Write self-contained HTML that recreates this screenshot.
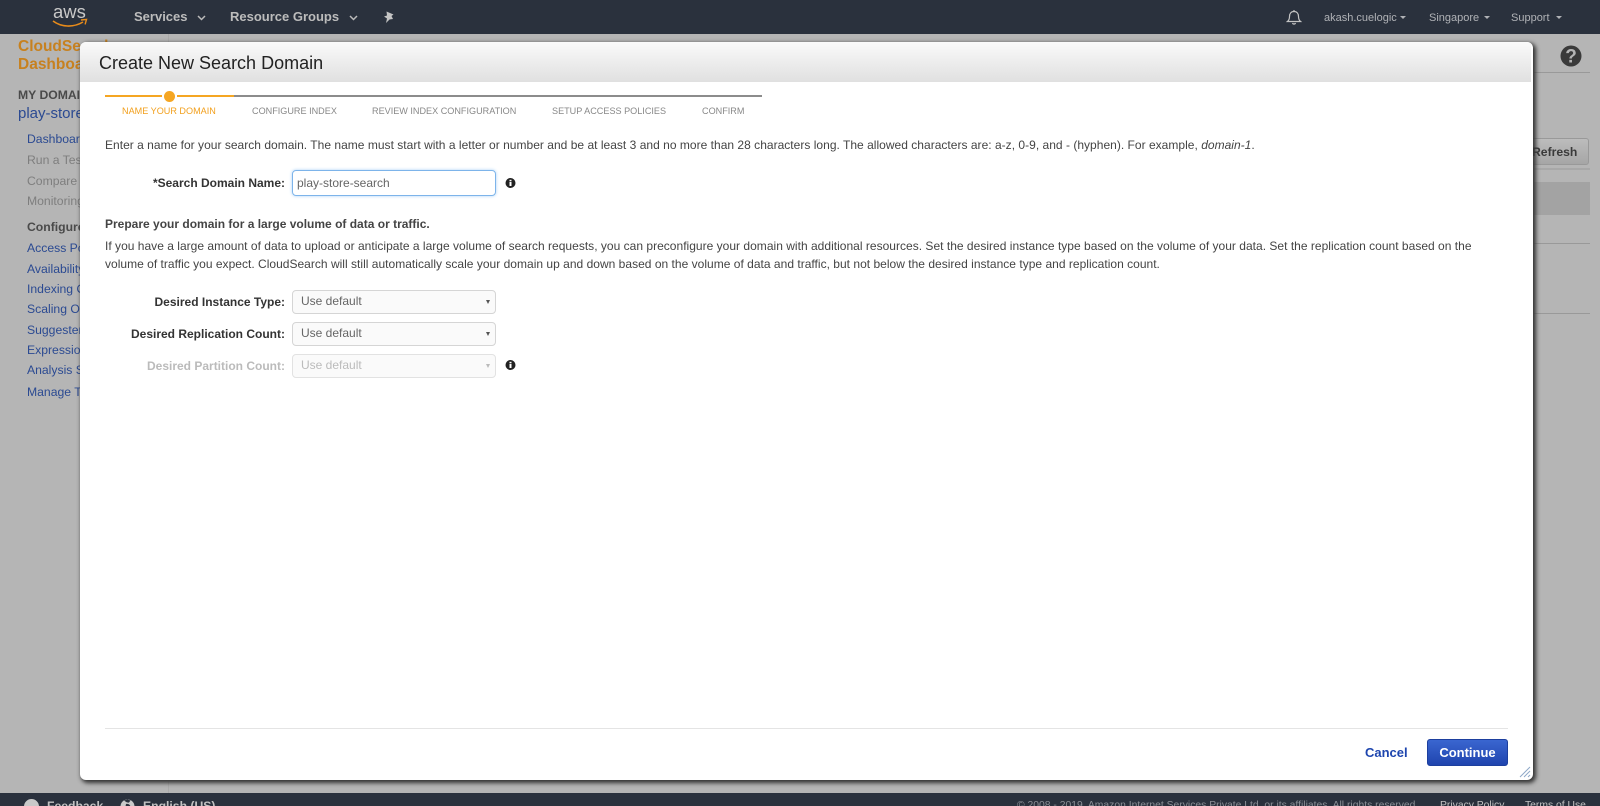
<!DOCTYPE html>
<html><head><meta charset="utf-8"><title>Create New Search Domain</title>
<style>
html,body{margin:0;padding:0;width:1600px;height:806px;overflow:hidden;background:#b5b5b5;font-family:"Liberation Sans",Arial,sans-serif;color:#444}
.a{position:absolute;white-space:nowrap}
#top{position:absolute;left:0;top:0;width:1600px;height:34px;background:#2a313d}
#foot{position:absolute;left:0;top:793px;width:1600px;height:13px;background:#2a313d;overflow:hidden}
.nav{color:#bcbcbc;font-weight:bold;font-size:13px;line-height:16px;top:9px}
.rn{color:#b0b2b6;font-size:11px;line-height:14px;top:11px}
.side{left:27px;font-size:12.2px;line-height:16px;color:#2b4a92}
.dis{color:#7e7e7e}
#modal{position:absolute;left:80px;top:42px;width:1453px;height:738px;background:#fff;border-radius:6px;box-shadow:2px 2px 4px 1px #333;overflow:hidden}
#mh{position:absolute;left:0;top:0;right:2px;height:40px;background:linear-gradient(#fafafa,#e0e0e0)}
.st{font-size:9.1px;line-height:12px;color:#888;top:63px}
.t{font-size:12px;line-height:16px;color:#444}
.lbl{font-size:12px;line-height:16px;font-weight:bold;color:#333;text-align:right;width:205px;left:0}
.sel{position:absolute;left:212px;width:204px;height:24px;box-sizing:border-box;border:1px solid #d5d5d5;border-radius:4px;background:#fafafa;font-size:12px;line-height:21px;color:#666;padding-left:8px}
.sel i{position:absolute;left:193px;top:9px;width:0;height:0;border-left:2.500px solid transparent;border-right:2.500px solid transparent;border-top:4px solid #555}
.ft{font-size:10.35px;line-height:16px;top:5px}
</style></head><body>

<div id="top">
<svg class="a" style="left:52px;top:5px" width="38" height="24" viewBox="0 0 38 24"><path d="M1 16C9 22 21 23 31 17" fill="none" stroke="#e88b1a" stroke-width="1.6"/><path d="M29 15l5.500-.6-1.400 5" fill="none" stroke="#e88b1a" stroke-width="1.400"/><text x="1" y="13" font-family="Liberation Sans" font-size="18.500" fill="#c9c9c9">aws</text></svg>
<div class="a nav" style="left:134px">Services</div>
<svg class="a" style="left:197px;top:15px" width="9" height="6"><path d="M1 1l3.500 3.500L8 1" fill="none" stroke="#bbb" stroke-width="1.500"/></svg>
<div class="a nav" style="left:230px">Resource Groups</div>
<svg class="a" style="left:349px;top:15px" width="9" height="6"><path d="M1 1l3.500 3.500L8 1" fill="none" stroke="#bbb" stroke-width="1.500"/></svg>
<svg class="a" style="left:383px;top:11px" width="12" height="13" viewBox="0 0 12 13"><path d="M3.500 0.500L10.500 3.500 8.500 5 10 8 6.500 8.500 3 12 4 7.500 1 5.500 4 4.500z" fill="#c4c4c4"/></svg>
<svg class="a" style="left:1286px;top:9px" width="16" height="16" viewBox="0 0 16 16"><path d="M1.500 12.500c1.500-1.200 2-2.500 2-5 0-3 1.700-5 4.500-5s4.500 2 4.500 5c0 2.500.5 3.800 2 5zM6.500 14a1.600 1.600 0 0 0 3 0M8 1v1.500" fill="none" stroke="#c4c4c4" stroke-width="1.200"/></svg>
<div class="a rn" style="left:1324px">akash.cuelogic</div>
<div class="a" style="left:1400px;top:16px;width:0;height:0;border:3px solid transparent;border-top:3.500px solid #b0b2b6;border-bottom:0"></div>
<div class="a rn" style="left:1429px">Singapore</div>
<div class="a" style="left:1484px;top:16px;width:0;height:0;border:3px solid transparent;border-top:3.500px solid #b0b2b6;border-bottom:0"></div>
<div class="a rn" style="left:1511px">Support</div>
<div class="a" style="left:1556px;top:16px;width:0;height:0;border:3px solid transparent;border-top:3.500px solid #b0b2b6;border-bottom:0"></div>
</div>

<div class="a" style="left:168px;top:34px;width:1px;height:760px;background:#aaa"></div>
<div class="a" style="left:18px;top:38px;font-size:15.500px;line-height:17.500px;font-weight:bold;color:#c7811f">CloudSearch<br>Dashboard</div>
<div class="a" style="left:18px;top:87px;font-size:12.200px;line-height:16px;font-weight:bold;color:#4a4a4a">MY DOMAINS</div>
<div class="a" style="left:18px;top:104px;font-size:15px;line-height:20px;color:#2b4a92">play-store-search</div>
<div class="a side" style="top:131px">Dashboard</div>
<div class="a side dis" style="top:152px">Run a Test</div>
<div class="a side dis" style="top:173px">Compare</div>
<div class="a side dis" style="top:193px">Monitoring</div>
<div class="a side" style="top:219px;color:#4a4a4a;font-weight:bold">Configure</div>
<div class="a side" style="top:240px">Access Policies</div>
<div class="a side" style="top:261px">Availability</div>
<div class="a side" style="top:281px">Indexing Options</div>
<div class="a side" style="top:301px">Scaling Options</div>
<div class="a side" style="top:322px">Suggesters</div>
<div class="a side" style="top:342px">Expressions</div>
<div class="a side" style="top:362px">Analysis Schemes</div>
<div class="a side" style="top:384px">Manage Tags</div>

<svg class="a" style="left:1560px;top:45px" width="22" height="22" viewBox="0 0 22 22"><circle cx="11" cy="11" r="10.500" fill="#3a3a3a"/><text x="11" y="17.500" text-anchor="middle" font-family="Liberation Sans" font-weight="bold" font-size="19" fill="#b5b5b5">?</text></svg>
<div class="a" style="left:1534px;top:72px;width:56px;height:1px;background:#999"></div>
<div class="a" style="left:1500px;top:138px;width:89px;height:27px;box-sizing:border-box;border:1px solid #999;border-radius:3px;background:linear-gradient(#bcbcbc,#a6a6a6)"></div>
<div class="a" style="left:1532px;top:144px;font-size:12.200px;line-height:16px;font-weight:bold;color:#3a3a3a">Refresh</div>
<div class="a" style="left:1534px;top:168px;width:56px;height:2px;background:#a8a8a8"></div>
<div class="a" style="left:1534px;top:182px;width:56px;height:33px;background:#a3a3a3"></div>
<div class="a" style="left:1534px;top:243px;width:56px;height:1px;background:#999"></div>
<div class="a" style="left:1534px;top:313px;width:56px;height:1px;background:#999"></div>

<div id="foot">
<div class="a" style="left:24px;top:6px;width:15px;height:15px;border-radius:50%;background:#c9c9c9"></div>
<div class="a" style="left:47px;top:5px;font-size:12.200px;line-height:16px;font-weight:bold;color:#c2c2c2">Feedback</div>
<svg class="a" style="left:120px;top:6px" width="15" height="15" viewBox="0 0 15 15"><circle cx="7.500" cy="7.500" r="7" fill="#c9c9c9"/><path d="M4 1.500C6 3 7.500 4 9 3.500L10.500 1.500 7.500 .5zM6 5c2-.5 4 .5 4.500 2.500L8 9 5.500 7.500z" fill="#2a313d"/></svg>
<div class="a" style="left:143px;top:5px;font-size:12.200px;line-height:16px;font-weight:bold;color:#c2c2c2">English (US)</div>
<div class="a ft" style="left:1017px;color:#8b8f96">© 2008 - 2019, Amazon Internet Services Private Ltd. or its affiliates. All rights reserved.</div>
<div class="a ft" style="left:1440px;color:#c2c2c2">Privacy Policy</div>
<div class="a ft" style="left:1525px;color:#c2c2c2">Terms of Use</div>
</div>

<div id="modal">
<div id="mh"></div>
<div class="a" style="left:19px;top:10px;font-size:18px;line-height:22px;color:#222">Create New Search Domain</div>

<div class="a" style="left:25px;top:53px;width:57px;height:2px;background:#f5a623"></div>
<div class="a" style="left:97px;top:53px;width:57px;height:2px;background:#f5a623"></div>
<div class="a" style="left:154px;top:53px;width:528px;height:2px;background:#8c8c8c"></div>
<div class="a" style="left:84px;top:49px;width:11px;height:11px;border-radius:50%;background:#f5a623"></div>
<div class="a st" style="left:42px;color:#f2a01e">NAME YOUR DOMAIN</div>
<div class="a st" style="left:172px">CONFIGURE INDEX</div>
<div class="a st" style="left:292px">REVIEW INDEX CONFIGURATION</div>
<div class="a st" style="left:472px">SETUP ACCESS POLICIES</div>
<div class="a st" style="left:622px">CONFIRM</div>

<div class="a t" style="left:25px;top:95px;letter-spacing:.02px">Enter a name for your search domain. The name must start with a letter or number and be at least 3 and no more than 28 characters long. The allowed characters are: a-z, 0-9, and - (hyphen). For example, <i>domain-1</i>.</div>

<div class="a lbl" style="top:133px;">*Search Domain Name:</div>
<div class="a" style="left:212px;top:128px;width:204px;height:26px;box-sizing:border-box;border:1px solid #7db4ea;border-radius:4px;box-shadow:0 0 3px #a9d0f5;font-size:12px;line-height:24px;color:#666;padding-left:4px">play-store-search</div>
<svg class="a" style="left:425px;top:135px" width="11" height="12" viewBox="0 0 11 12"><circle cx="5.500" cy="6" r="5" fill="#222"/><rect x="4.500" y="5" width="2" height="4" fill="#fff"/><rect x="4.500" y="2.800" width="2" height="1.500" fill="#fff"/></svg>

<div class="a t" style="left:25px;top:174px;font-weight:bold">Prepare your domain for a large volume of data or traffic.</div>
<div class="a t" style="left:25px;top:196px;line-height:17.500px;letter-spacing:.017px">If you have a large amount of data to upload or anticipate a large volume of search requests, you can preconfigure your domain with additional resources. Set the desired instance type based on the volume of your data. Set the replication count based on the<br>volume of traffic you expect. CloudSearch will still automatically scale your domain up and down based on the volume of data and traffic, but not below the desired instance type and replication count.</div>

<div class="a lbl" style="top:252px">Desired Instance Type:</div>
<div class="sel" style="top:248px">Use default<i></i></div>
<div class="a lbl" style="top:284px">Desired Replication Count:</div>
<div class="sel" style="top:280px">Use default<i></i></div>
<div class="a lbl" style="top:316px;color:#bbb">Desired Partition Count:</div>
<div class="sel" style="top:312px;color:#bbb;border-color:#e2e2e2">Use default<i style="border-top-color:#bbb"></i></div>
<svg class="a" style="left:425px;top:317px" width="11" height="12" viewBox="0 0 11 12"><circle cx="5.500" cy="6" r="5" fill="#222"/><rect x="4.500" y="5" width="2" height="4" fill="#fff"/><rect x="4.500" y="2.800" width="2" height="1.500" fill="#fff"/></svg>

<div class="a" style="left:25px;top:686px;width:1403px;height:1px;background:#e4e4e4"></div>
<div class="a" style="left:1285px;top:703px;font-size:13px;line-height:16px;font-weight:bold;color:#1d45ae">Cancel</div>
<div class="a" style="left:1347px;top:697px;width:81px;height:27px;box-sizing:border-box;border:1px solid #1d3f9e;border-radius:3px;background:linear-gradient(#3a66d0,#1f44ae);color:#fff;font-size:13px;line-height:25px;font-weight:bold;text-align:center">Continue</div>
<svg class="a" style="left:1439px;top:724px" width="12" height="12"><path d="M1 11L11 1M5 11l6-6M9 11l2-2" stroke="#8fa8c8" stroke-width="1"/></svg>
</div>
</body></html>
